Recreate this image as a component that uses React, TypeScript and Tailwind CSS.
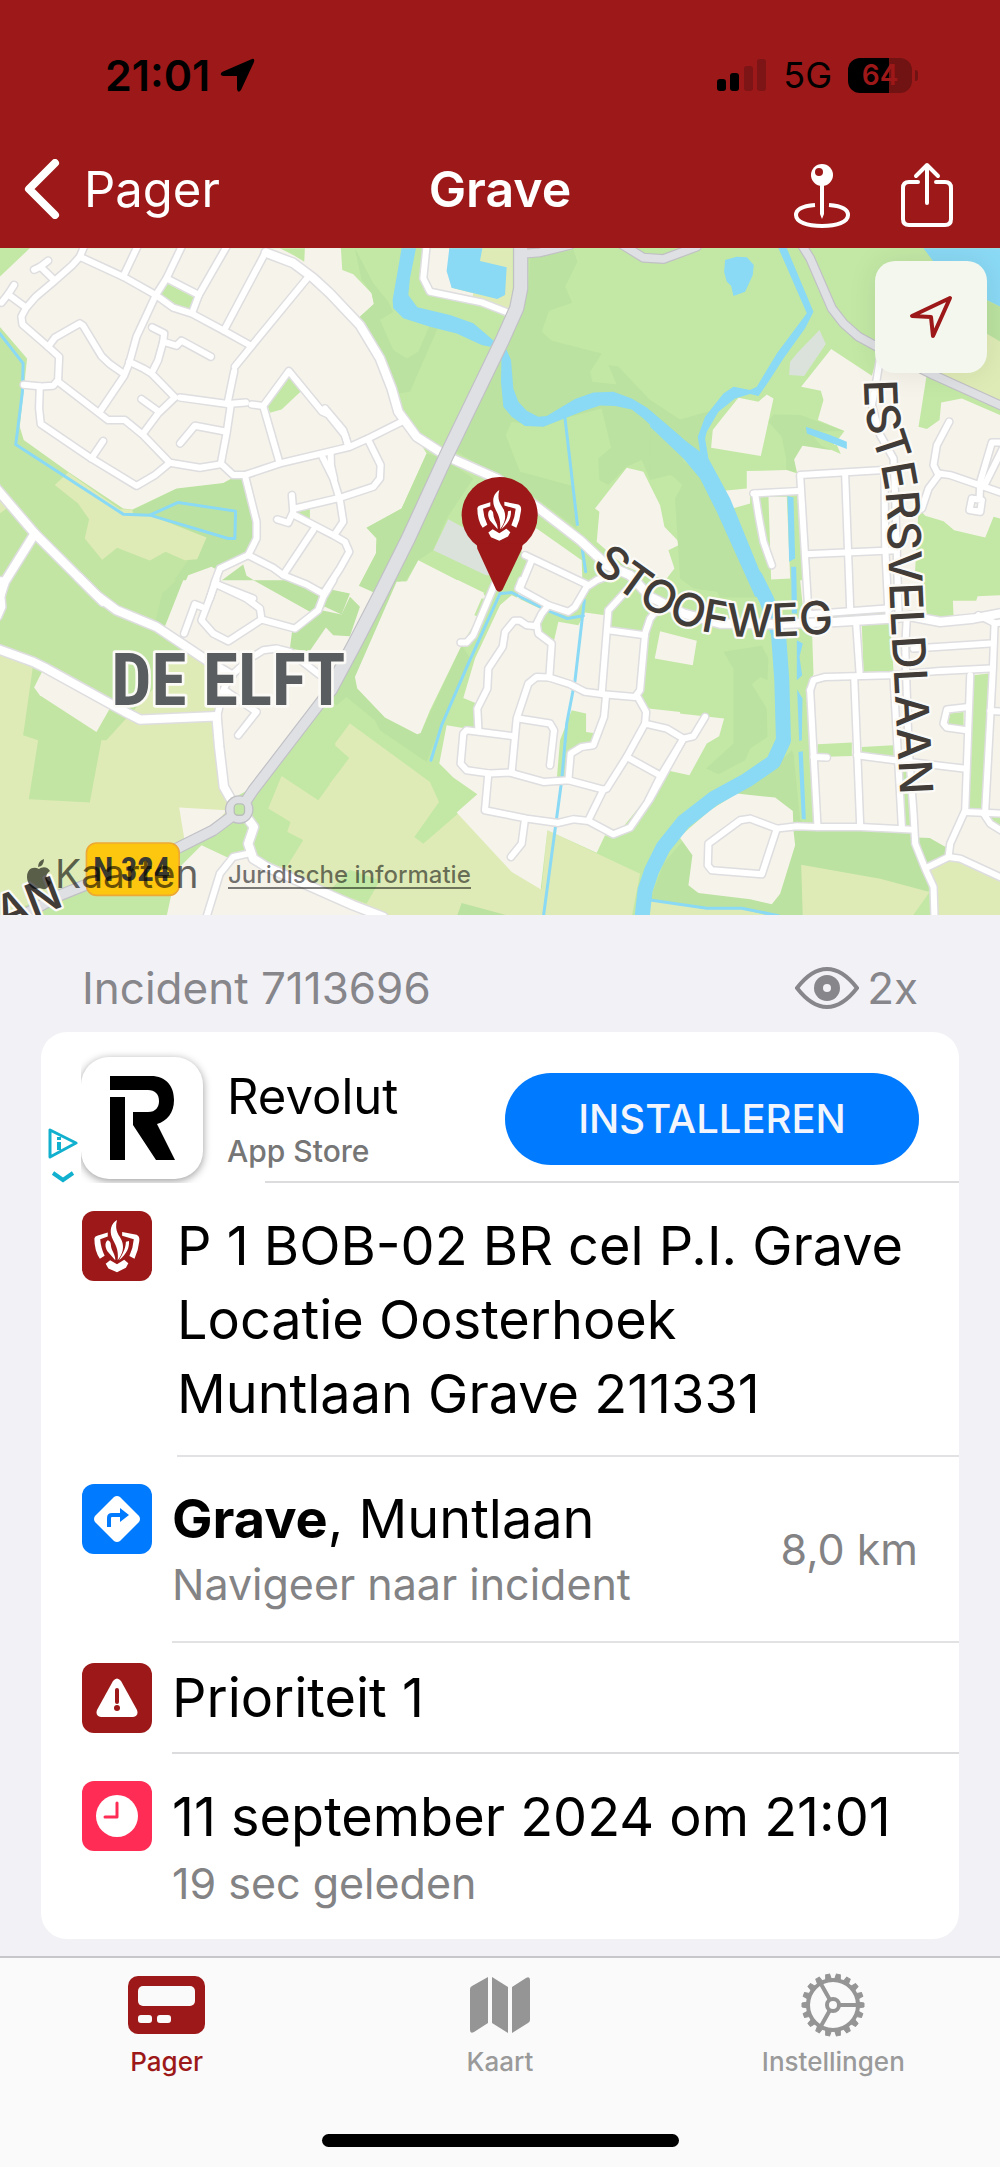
import type { ReactNode } from "react";

const CREAM = "#f6f3eb";
const LIGHT = "#c3e8a5";
const MEADOW = "#c3e5a4";
const WOOD = "#bbe2a0";
const FIELD = "#dfebb6";
const WATER = "#8ad9f5";
const PAVED = "#dbe2db";

type Sheet = {
  x: number;
  y: number;
  areas: [string, string][];
  water?: string[];
  rivers?: string[];
  streams?: string[];
  roads: string[];
  avenues?: string[];
  highways?: string[];
  trunk?: string[];
};

/* The map is surveyed in six sheets, each with its own origin. */
const sheets: Sheet[] = [
  {
    x: 0,
    y: -9,
    areas: [
      [MEADOW, "0,245 78,345 60,545 72,585 400,795 700,700 780,830 600,1050 0,1050"],
      [WOOD, "398,795 530,730 670,714 695,700 730,700 770,830 770,880 745,930 640,970 565,990 540,1050 490,1050 565,945 450,900"],
      [CREAM, "0,95 90,10 1020,10 1020,1050 635,1050 660,970 745,930 770,880 770,830 735,700 695,700 670,714 530,730 398,793 370,790 205,680 72,585 60,545 82,340 0,245"],
      [CREAM, "565,990 635,965 660,980 640,1060 535,1060"],
      [LIGHT, "840,10 915,10 913,50 880,30"],
      [LIGHT, "500,115 585,158 570,195 520,180 482,148"],
      [LIGHT, "868,397 905,437 845,493 810,503 802,478"],
      [LIGHT, "885,803 1018,770 1010,840 1000,868"],
      [WOOD, "660,1010 730,958 740,992 845,1056 640,1050"],
      [FIELD, "205,682 360,792 397,793 400,806 455,812 620,877 592,942 555,945 497,920 450,946 352,908 307,944 255,880 268,822 235,775 165,720"],
      [FIELD, "0,765 20,790 0,805"],
    ],
    streams: ["0,265 70,355 68,440 48,598 370,807 450,810 535,772 707,798 705,880 685,880 450,810"],
    roads: [
      "255,0 240,35 218,60 165,107 108,155 78,190 65,215 68,238 145,305 178,335 175,405 160,422 125,424 72,419",
      "145,47 122,65 103,74",
      "122,65 163,105",
      "43,120 25,148 5,173",
      "25,148 75,185",
      "240,35 370,95 468,150 520,188 575,205 672,257 755,303",
      "415,0 370,95",
      "548,0 500,100 468,150 438,215 410,275 388,355 373,392 300,500",
      "500,100 597,150",
      "683,0 597,150 577,203",
      "798,20 672,257",
      "930,90 755,303 705,365",
      "703,378 683,475 692,485 680,565 663,655",
      "145,305 165,278 240,235 250,242 305,333 330,357 370,385",
      "175,410 325,525 375,525 430,570 510,653 600,668 665,657 700,690 735,690 840,655 1050,605 1105,580 1155,555 1205,530",
      "120,424 118,490 123,537 275,640 410,722 465,690 510,653",
      "310,588 275,640",
      "388,350 430,370 455,385 525,457 475,505 430,565",
      "425,462 475,498",
      "457,247 493,265 490,290 475,345 460,375",
      "490,290 530,302 545,287 633,335",
      "540,457 683,477 738,472",
      "755,478 790,483 867,378 967,500 985,508 1035,570 1045,605",
      "790,483 838,650",
      "541,595 585,542 680,560",
      "735,690 770,830 770,880 745,930 660,970 645,1010 630,1060",
      "745,930 820,968 850,990 920,1018 970,1046",
      "850,990 940,855",
      "965,630 1000,700 1020,765 1030,830 1003,870",
      "992,620 993,660 1002,700",
      "876,750 880,800 865,833 832,823",
      "885,790 1020,758 1120,725 1140,700 1142,660 1105,585",
      "880,808 1000,870 1035,890 1048,920 1020,970 970,1046",
      "645,1015 760,1060",
    ],
    avenues: ["-10,730 105,865 310,1070", "105,865 15,1010 -5,1070"],
  },
  {
    x: 990,
    y: -9,
    areas: [
      [CREAM, "-60,10 33,10 37,75 70,88 125,145 132,177 90,215 150,350 195,470 290,625 215,790 110,848 140,880 138,925 70,1055 -60,1055"],
      [WOOD, "75,10 130,115 175,170 190,200 150,225 190,315 230,340 265,320 300,240 325,245 240,440 205,445 150,350 90,215 132,177 125,145 95,105"],
      [WOOD, "600,40 730,15 742,50 705,125 727,173 657,197 635,260 665,287 815,325 780,380 787,410 860,418 835,360 865,365 960,465 1060,530 1060,700 1020,690 960,705 935,645 890,665 835,720 808,705 805,640 843,608 815,490 700,520 640,545 545,530 527,570 570,680 725,722 740,850 620,760 500,690 380,620 500,360 595,130"],
      [WOOD, "290,625 340,640 430,700 350,820 310,915 265,945 225,1010 160,1055 70,1055 138,925 140,880 110,848 215,790"],
      [PAVED, "355,822 460,880 490,990 468,990 310,915"],
      [CREAM, "265,945 460,1045 470,1060 195,1060 212,1010 230,1010"],
      [CREAM, "620,850 755,945 757,1010 575,920 560,860"],
      [CREAM, "600,940 760,1020 760,1060 560,1060 575,1010"],
      [CREAM, "890,668 940,680 990,780 1003,845 1042,885 1045,900 1015,915 1033,970 1010,1000 950,990 880,960 800,890 808,800 795,790"],
      [FIELD, "450,10 548,10 548,150 535,195 420,160"],
      [CREAM, "300,10 358,10 365,128 430,145 425,165 310,140 290,110"],
    ],
    water: [
      "215,10 258,10 240,100 235,150 262,187 360,210 430,235 495,290 480,305 455,300 380,265 300,245 220,220 190,190 188,165",
      "358,10 457,10 450,48 530,67 525,150 502,162 365,128 350,78",
      "515,310 530,315 543,345 550,430 565,470 590,497 625,515 650,513 735,462 790,442 850,440 905,460 950,487 1052,575 1052,628 940,520 905,493 855,483 810,481 760,498 640,545 585,543 545,515 520,485 513,410",
    ],
    streams: ["705,520 742,838", "757,913 767,980"],
    roads: ["290,0 280,100 300,140 455,172 535,203", "-15,490 40,555 55,600", "605,945 570,1030"],
    avenues: [
      "-192,23 -110,54 -50,99 0,145 90,240 150,340 185,430 205,500 260,575 345,630",
      "365,640 500,700 620,785 750,885 830,960 900,990",
    ],
    highways: ["595,25 630,22 720,0", "870,-5 940,38 1000,42 1100,5"],
    trunk: ["572,-10 572,130 560,190 515,290 350,630 235,880 150,1050 75,1195 0,1335"],
  },
  {
    x: 1950,
    y: -9,
    areas: [
      [WOOD, "0,465 85,525 190,495 150,570 160,640 100,620 0,540"],
      [WOOD, "0,690 65,690 97,720 75,760 90,1000 130,1030 310,1055 250,850 170,700 90,640 0,560"],
      [WOOD, "355,530 370,508 450,510 583,558 570,625 457,602 432,643 445,680 408,680 408,640 395,575"],
      [LIGHT, "480,560 583,558 570,625 510,600"],
      [PAVED, "508,255 527,297 462,393 417,390 420,350 440,325"],
      [CREAM, "543,312 665,392 680,340 830,385 805,545 830,552 868,525 873,472 935,460 1050,510 1050,820 1030,815 1005,877 912,855 880,828 825,812 805,790 790,1060 470,1060 455,720 440,680 432,643 457,602 540,615 583,558 503,525 520,465 512,437 453,425"],
      [LIGHT, "510,600 572,627 560,600"],
      [CREAM, "265,458 325,470 350,448 370,460 332,633 183,608 188,555 215,520"],
      [CREAM, "290,678 410,675 455,690 450,745 300,745 300,775 247,790 222,737 290,730"],
      [CREAM, "355,755 410,755 420,1000 363,1003"],
      [FIELD, "1010,250 1050,280 1050,470 850,385 900,300"],
      [WOOD, "1005,165 1050,185 1050,290 1000,260"],
    ],
    water: [
      "820,10 1050,10 1050,185 980,150 850,50",
      "225,45 260,35 290,37 311,60 308,90 285,140 250,153 243,122 230,110 222,80",
      "0,496 110,590 150,620 143,575 165,515 220,445 250,425 300,435 320,425 380,325 470,205 383,5 408,5 490,200 465,250 400,340 355,410 325,453 300,447 255,460 205,500 170,560 165,580 175,640 240,760 360,1055 315,1055 200,800 150,700 100,640 0,545",
      "467,545 540,570 590,590 590,612 470,565",
      "412,753 430,757 435,940 417,950",
      "423,965 438,965 441,1105 425,1105",
    ],
    roads: [
      "690,335 680,400 665,480 690,570 730,640 735,760 745,1100",
      "310,745 445,738",
      "315,745 325,810 340,890 365,960",
      "475,1105 450,690 700,675",
      "585,690 600,1090",
      "465,927 740,915",
      "703,690 705,900 715,1110",
      "795,800 815,790 835,730 865,690 850,660 860,600 897,530",
      "865,685 900,690 1060,745",
      "988,760 990,710 1025,592 1060,592",
      "1060,605 1003,720",
      "965,760 995,765 990,800 958,795 965,760",
    ],
    highways: ["455,0 480,40 545,190 580,235 625,275 680,305 850,390 1060,485"],
  },
  {
    x: 0,
    y: 996,
    areas: [
      [MEADOW, "0,0 555,0 495,135 620,240 510,310 320,480 280,670 80,660 0,225"],
      [WOOD, "530,0 555,0 495,135 465,130 487,40"],
      [CREAM, "550,0 760,0 1040,0 1140,45 1050,200 990,330 760,620 690,660 665,620 650,400 690,290 495,140"],
      [WOOD, "760,0 860,0 1050,40 1025,103 975,80 965,90 885,145 930,95"],
      [WOOD, "877,150 965,90 1025,103 1050,50 1080,80 1050,168 1000,165 978,142 928,215 870,205"],
      [FIELD, "0,225 100,255 70,465 115,480 87,657 270,667 305,480 320,480 465,320 510,250 555,205 630,245 690,290 640,400 650,480 665,620 690,660 690,700 640,750 400,840 180,930 0,1010"],
      [CREAM, "128,272 330,385 290,455 120,345 103,322"],
      [CREAM, "538,682 680,690 640,740 555,785"],
      [CREAM, "605,795 680,830 760,830 1110,1010 500,1010 515,940 540,860"],
      [FIELD, "845,587 955,660 1050,530 1005,490 1050,430 1050,970 780,850 910,780 862,755 872,725 805,685"],
      [LIGHT, "780,850 860,860 910,780 862,755 800,760"],
    ],
    roads: [
      "-10,-0 15,0 5,50 8,80 -5,110",
      "650,0 605,120 640,160 685,183 785,118 885,145 955,90 970,50 1000,0",
      "645,10 740,55 780,85 785,118",
      "605,80 585,72 553,160",
      "690,290 750,235 790,210 830,205 870,215 960,285",
      "652,408 670,330 690,290",
      "675,330 770,395 715,465",
      "745,820 700,830 660,880 620,1010",
    ],
    avenues: [
      "235,-10 290,45 350,90 470,140 620,240 695,285",
      "-10,205 100,245 140,265 385,400 420,418 650,408",
      "650,408 658,500 672,620 692,655",
      "740,710 762,740 745,790 760,835 800,860 1060,975 1150,1010",
    ],
    trunk: ["990,330 760,630 720,690", "720,690 640,750 530,805 180,945 60,1010"],
  },
  {
    x: 990,
    y: 996,
    areas: [
      [WOOD, "160,0 210,0 75,290 82,325 165,412 262,462 272,458 395,195 425,240 330,440 290,545 150,450 135,420 50,350 20,375 0,360 0,320"],
      [FIELD, "60,430 300,605 327,665 253,770 280,790 385,700 545,875 635,925 652,750 930,880 905,1010 150,1010 0,940 0,610 60,535 15,495"],
      [LIGHT, "60,868 150,900 110,970 0,930"],
      [WOOD, "380,1010 395,968 550,1010"],
      [CREAM, "200,5 385,0 462,38 433,105 445,110 395,195 300,390 272,458 262,462 165,412 82,325 75,290"],
      [CREAM, "545,45 510,75 435,235 400,353 440,370 440,450 350,435 328,550 370,592 442,642 380,697 545,875 632,927 652,750 800,817 825,765 855,770 960,640 1020,572 1050,570 1050,395 955,385 920,340 945,170 835,150 825,105 765,97 745,135 685,125 670,190 620,150 640,90"],
      [LIGHT, "725,390 768,400 768,455 800,460 780,490 720,510 715,600 680,600 690,480"],
      [CREAM, "570,0 570,25 710,95 765,20 740,0"],
    ],
    streams: [
      "640,85 545,37 510,40 415,250 335,435 303,540",
      "640,85 712,115 760,107",
      "763,60 735,300 710,430 695,600 640,1010",
    ],
    roads: [
      "495,10 430,165 410,187 392,187",
      "585,-75 775,15",
      "575,0 565,25 655,75 715,95 735,80 770,20 800,0 840,-15",
      "655,75 635,100 620,130 625,160 665,190 658,290",
      "620,138 590,135 570,122 552,122 525,155 518,200 475,265 472,325 442,385 445,445",
      "545,467 410,450 400,460 392,550 410,570 480,580 540,577 640,605 715,600 820,628",
      "658,292 620,290 595,310 560,415 545,575",
      "658,292 720,312 765,335 820,342 915,350 930,330 945,160 960,115 980,90",
      "565,415 660,430 672,450 660,555",
      "475,580 465,690 590,715 685,728 730,717 775,722 850,762 900,742 960,655 1060,475",
      "585,715 575,790 543,830",
      "890,30 835,90 815,340",
      "835,150 945,165",
      "828,345 822,410 790,495 755,500 722,520 715,600",
      "920,345 948,395 945,430 890,530 830,625 820,628 775,720",
      "945,430 1010,445 1060,475 1090,468 1125,410",
      "890,530 990,585",
    ],
  },
  {
    x: 1950,
    y: 996,
    areas: [
      [WOOD, "220,215 335,197 355,235 352,300 330,290 305,312 350,385 352,470 300,505 285,540 205,582 168,565 250,490 250,265"],
      [WOOD, "100,0 300,0 330,52 210,52 195,25"],
      [WOOD, "430,520 450,720 470,735 785,750 830,870 835,930 780,1010 380,1010 0,960 40,850 100,780 260,640 350,580 425,510"],
      [CREAM, "450,0 820,0 830,110 910,108 908,62 978,62 982,48 1050,45 1050,720 1020,720 950,705 885,800 838,773 805,772 785,745 500,740 478,330 490,280 485,130 460,100"],
      [WOOD, "805,772 838,773 885,800 890,830 830,860"],
      [CREAM, "950,700 995,710 1050,760 1050,885 895,830 890,800"],
      [LIGHT, "470,98 720,85 720,112 560,125 480,125"],
      [LIGHT, "635,135 720,125 730,272 640,275"],
      [LIGHT, "502,492 605,487 605,527 502,530"],
      [LIGHT, "635,500 728,495 735,535 635,515"],
      [LIGHT, "970,285 1015,280 995,685 955,685"],
      [LIGHT, "900,400 940,395 940,438 892,435"],
      [LIGHT, "755,540 775,540 780,735 765,740"],
      [LIGHT, "1010,710 1050,705 1050,740"],
      [CREAM, "30,153 140,182 128,255 14,235"],
      [CREAM, "0,390 222,415 207,468 170,490 118,585 60,572 0,640"],
      [CREAM, "88,770 180,690 260,640 375,652 428,692 430,750 435,795 390,940 365,972 300,957 145,938 115,915 127,825"],
      [FIELD, "453,853 690,895 838,935 785,1010 458,1010"],
      [FIELD, "835,870 895,840 940,850 1050,900 1050,1010 860,1010"],
      [FIELD, "-10,960 170,987 275,987 375,1010 -20,1010"],
    ],
    water: [
      "440,180 458,190 448,230 456,285 440,300",
      "441,328 457,355 455,480 447,482",
      "445,515 458,513 467,717 455,717",
    ],
    rivers: ["315,-10 350,60 385,160 395,300 400,480 370,545 290,600 190,655 100,725 40,800 5,870 -15,930 -25,1020"],
    streams: ["-5,958 170,984 275,984 385,1006"],
    roads: [
      "475,102 720,84",
      "618,130 628,275",
      "612,290 630,735",
      "480,330 490,300 525,290 720,285 870,272 1020,265",
      "480,330 502,740",
      "730,290 755,740",
      "790,205 1020,190",
      "1033,130 1028,265 1005,690",
      "960,285 945,690 900,790 895,830 830,862",
      "895,830 930,835 1060,895",
      "945,695 1060,700",
      "1000,700 1020,730 1060,755",
      "1020,392 1060,394",
      "955,380 890,388 880,430 890,442 950,450",
      "620,525 735,540 940,565",
      "490,530 530,532",
      "380,745 440,738 502,740 630,740 785,748",
      "380,745 300,715 270,720 175,790 173,855 185,870 335,882 380,745",
      "100,475 30,590 -5,660",
      "985,105 1035,130 1060,125",
      "770,110 765,200 775,500 790,700 795,790 825,865 850,920 853,1015",
    ],
    avenues: ["-60,-15 0,50 100,100 210,130 370,132 560,125 720,115 780,108 870,125 970,115 1060,98"],
  },
];

function SheetLayer({ draw }: { draw: (sheet: Sheet) => ReactNode }) {
  return (
    <>
      {sheets.map((s, i) => (
        <g key={i} transform={`translate(${s.x} ${s.y})`}>
          {draw(s)}
        </g>
      ))}
    </>
  );
}

function lines(list: string[] | undefined, stroke: string, width: number) {
  return (list ?? []).map((points) => (
    <polyline
      key={points}
      points={points}
      fill="none"
      stroke={stroke}
      strokeWidth={width}
      strokeLinecap="round"
      strokeLinejoin="round"
    />
  ));
}

function polygons(list: [string, string][]) {
  return list.map(([fill, points], i) => <polygon key={i} points={points} fill={fill} />);
}

function EmblemShapes() {
  return (
    <>
      <path d="M112 144Q113 138 120 136L151 126V138L129 146Q131 172 142 194L128 203Q112 180 112 144Z" />
      <path d="M193 125L235 133Q245 137 243 152Q240 180 229 203L214 195Q225 172 227 146L193 136Z" />
      <path d="M178 90C160 101 156 121 163 140C170 158 184 172 180 207C194 190 200 170 192 150C186 135 169 124 178 90Z" />
      <path d="M151 149C143 153 142 168 150 181L173 207C174 190 161 180 160 162C160 155 156 150 151 149Z" />
      <path d="M204 153L213 151C214 170 208 187 184 207C191 192 203 178 204 153Z" />
      <path d="M145 217L158 207L178 219L199 206L211 216L204 229L178 242L153 231Z" />
    </>
  );
}

function MapDrawing() {
  return (
    <svg viewBox="0 0 3000 2000" preserveAspectRatio="xMidYMid slice" className="block h-full w-full" role="img" aria-label="Kaart van Grave">
      <rect width="3000" height="2000" fill={LIGHT} />
      <SheetLayer draw={(s) => polygons(s.areas)} />
      <SheetLayer
        draw={(s) => (
          <>
            {polygons((s.water ?? []).map((p) => [WATER, p]))}
            {lines(s.rivers, WATER, 45)}
            {lines(s.streams, WATER, 9)}
          </>
        )}
      />
      <SheetLayer
        draw={(s) => (
          <>
            {lines(s.roads, "#dedddf", 27)}
            {lines(s.avenues, "#dedddf", 34)}
          </>
        )}
      />
      <SheetLayer
        draw={(s) => (
          <>
            {lines(s.roads, "#ffffff", 18)}
            {lines(s.avenues, "#ffffff", 25)}
          </>
        )}
      />
      <SheetLayer
        draw={(s) => (
          <>
            {lines(s.highways, "#c0c0c5", 30)}
            {lines(s.trunk, "#c0c0c5", s.x === 0 ? 36 : 46)}
          </>
        )}
      />
      <circle cx="718" cy="1684" r="43" fill="#c0c0c5" />
      <SheetLayer
        draw={(s) => (
          <>
            {lines(s.highways, "#dfe0e4", 23)}
            {lines(s.trunk, "#dfe0e4", s.x === 0 ? 29 : 39)}
          </>
        )}
      />
      <circle cx="718" cy="1684" r="39" fill="#dfe0e4" />
      <rect x="703" y="1667" width="31" height="34" rx="11" fill={LIGHT} stroke="#b9bdb9" strokeWidth="4" />

      <g
        fontFamily="Inter, sans-serif"
        fontWeight="500"
        fontSize="137"
        fill="#413c38"
        stroke="#fbfaf6"
        strokeWidth="14"
        strokeLinejoin="round"
        paintOrder="stroke"
      >
        <path id="stoofweg" d="M1772 955C1900 1065 2030 1163 2260 1166C2350 1166 2450 1160 2600 1145" fill="none" stroke="none" />
        <path id="estersveldlaan" d="M2592 396C2590 470 2600 530 2622 590C2642 645 2654 700 2660 780C2665 950 2670 1100 2680 1250L2706 1760" fill="none" stroke="none" />
        <text><textPath href="#stoofweg">STOOFWEG</textPath></text>
        <text><textPath href="#estersveldlaan">ESTERSVELDLAAN</textPath></text>
        <text transform="translate(8 2044) rotate(-21)">AN</text>
      </g>
      <text
        x="334"
        y="1370"
        fontFamily="'Liberation Sans Narrow', 'Roboto Condensed', 'DejaVu Sans Condensed', sans-serif"
        fontWeight="700"
        fontSize="214"
        fill="#595d5f"
        stroke="#fbfaf6"
        strokeWidth="16"
        strokeLinejoin="round"
        paintOrder="stroke"
      >
        DE ELFT
      </text>
      <rect x="260" y="1784" width="278" height="157" rx="30" fill="#fec70f" stroke="#eda935" strokeWidth="5" />
      <text
        x="396"
        y="1898"
        textAnchor="middle"
        fontFamily="'Liberation Sans Narrow', 'Roboto Condensed', 'DejaVu Sans Condensed', sans-serif"
        fontWeight="700"
        fontSize="98"
        fill="#3a3a30"
      >
        N 324
      </text>

      <g fill="#9d1818">
        <circle cx="1499" cy="801" r="114" />
        <path d="M1430 885L1568 885L1566 902L1508 1024Q1498 1038 1488 1024L1432 902Z" />
      </g>
      <g transform="translate(1320 636)" fill="#ffffff">
        <EmblemShapes />
      </g>
    </svg>
  );
}

function StatusBar() {
  return (
    <div className="flex h-[150px] items-center justify-between pr-[82px] pl-[105px] text-black">
      <div className="flex items-center gap-[10px]">
        <span className="text-[43px] leading-none font-semibold">21:01</span>
        <svg width="35" height="34" viewBox="0 0 35 34" aria-hidden="true">
          <path d="M32 1Q35 0 34 4L21 32Q18 36 17 31V18H3Q-1 17 2 14Z" />
        </svg>
      </div>
      <div className="flex items-center gap-4">
        <svg width="50" height="34" viewBox="0 0 50 34" aria-hidden="true">
          <rect x="0" y="21" width="9" height="12" rx="3" />
          <rect x="13" y="15" width="9" height="18" rx="3" />
          <rect x="27" y="8" width="9" height="25" rx="3" fill="#7d1416" />
          <rect x="40" y="1" width="9" height="32" rx="3" fill="#7d1416" />
        </svg>
        <span className="text-[36px] leading-none">5G</span>
        <div className="flex items-center gap-[3px]">
          <div className="flex h-[35px] w-16 items-center justify-center rounded-xl bg-[linear-gradient(90deg,#000_64%,#711213_64%)] text-[28px] leading-none font-semibold text-[#9d1818]">
            64
          </div>
          <div className="h-[11px] w-[3px] rounded-r bg-[#711213]" />
        </div>
      </div>
    </div>
  );
}

function NavBar() {
  return (
    <div className="grid h-[98px] grid-cols-3 items-center px-6 pb-5 text-white">
      <button type="button" className="flex items-center gap-6 justify-self-start">
        <svg width="36" height="60" viewBox="0 0 36 60" fill="none" stroke="currentColor" strokeWidth="8" strokeLinecap="round" strokeLinejoin="round" aria-hidden="true">
          <path d="M31 4L5 30L31 56" />
        </svg>
        <span className="text-[49px] leading-none">Pager</span>
      </button>
      <h1 className="justify-self-center text-[50px] leading-none font-semibold">Grave</h1>
      <div className="flex items-center gap-[50px] justify-self-end pt-3 pr-[22px]">
        <button type="button" aria-label="Locatie">
          <svg width="56" height="66" viewBox="0 0 56 66" fill="none" stroke="currentColor" aria-hidden="true">
            <circle cx="28" cy="13" r="11" fill="currentColor" stroke="none" />
            <circle cx="25" cy="10" r="4" fill="#9d1818" stroke="none" />
            <path d="M26 22H30L30 52L28 57L26 52Z" fill="currentColor" stroke="none" />
            <path d="M21 43C8 44 2 48 2 53C2 60 13 64 28 64C43 64 54 60 54 53C54 48 48 44 35 43" strokeWidth="4" />
          </svg>
        </button>
        <button type="button" aria-label="Delen">
          <svg width="54" height="66" viewBox="0 0 54 66" fill="none" stroke="currentColor" strokeWidth="4" strokeLinecap="round" strokeLinejoin="round" aria-hidden="true">
            <path d="M18 20H9Q3 20 3 26V57Q3 63 9 63H45Q51 63 51 57V26Q51 20 45 20H36" />
            <path d="M27 41V3M16 14L27 3L38 14" />
          </svg>
        </button>
      </div>
    </div>
  );
}

function MapPanel() {
  return (
    <section className="relative aspect-[1000/667] w-full overflow-hidden bg-[#c3e8a5]">
      <MapDrawing />
      <button
        type="button"
        aria-label="Mijn locatie"
        className="absolute top-[13px] right-[13px] flex size-28 items-center justify-center rounded-[20px] bg-[#f3f7ee] shadow-[0_0_30px_rgba(0,0,0,0.08)]"
      >
        <svg width="44" height="44" viewBox="0 0 44 44" fill="none" stroke="#9d1818" strokeWidth="4" strokeLinejoin="round" aria-hidden="true">
          <path d="M41 3L3 21L22 22L24 41Z" />
        </svg>
      </button>
      <div className="absolute bottom-[22px] left-[27px] flex items-center gap-1 text-black/60">
        <svg width="24" height="32" viewBox="0 0 24 32" fill="currentColor" aria-hidden="true">
          <path d="M17 1Q17 8 11 9Q11 3 17 1ZM12 11C15 9 20 8 23 13C18 16 18 22 24 24C22 29 19 32 16 31C13 30 12 30 9 31C5 32 0 25 0 19C0 11 6 8 12 11Z" />
        </svg>
        <span className="text-[39px] leading-none">Kaarten</span>
      </div>
      <a href="#juridisch" className="absolute bottom-[26px] left-[228px] border-b-2 border-black/50 text-[24px] leading-6 font-medium text-black/55">
        Juridische informatie
      </a>
    </section>
  );
}

function Tile({ color, children }: { color: string; children: ReactNode }) {
  return <div className={`flex size-[70px] shrink-0 items-center justify-center rounded-xl ${color}`}>{children}</div>;
}

function AdRow() {
  return (
    <div className="flex h-[151px]">
      <div className="flex w-10 shrink-0 flex-col items-center justify-end gap-3 pl-1">
        <svg width="30" height="31" viewBox="0 0 30 31" fill="none" stroke="#11b0ce" strokeWidth="3" strokeLinejoin="round" aria-label="Advertentie">
          <path d="M2 2V29L28 15Z" />
          <path d="M11 9V12M11 14V22" strokeWidth="4" />
        </svg>
        <svg width="24" height="12" viewBox="0 0 24 12" fill="none" stroke="#11b0ce" strokeWidth="4" aria-hidden="true">
          <path d="M2 2L12 9L22 2" />
        </svg>
      </div>
      <div className="flex w-[184px] shrink-0 overflow-hidden pt-[25px]">
        <div className="flex size-[122px] items-center justify-center rounded-[28px] bg-white shadow-[0_2px_8px_rgba(0,0,0,0.4)]">
          <svg width="68" height="84" viewBox="0 0 68 84" aria-label="Revolut">
            <path d="M2 21H17V84H2Z" />
            <path d="M2 0H43C58 0 66 10 66 24C66 37 59 45 49 48L67 84H48L25 49V36H40C48 36 51 31 51 25C51 18 47 14 40 14H2Z" />
          </svg>
        </div>
      </div>
      <div className="flex min-w-0 flex-1 items-center justify-between border-b-2 border-[#dcdcde] pt-6 pr-10">
        <div className="-ml-[38px]">
          <div className="text-[49px] leading-[56px]">Revolut</div>
          <div className="pt-2 text-[30px] leading-9 font-medium text-[#767676]">App Store</div>
        </div>
        <button type="button" className="h-[92px] w-[414px] rounded-full bg-[#007aff] text-[40px] font-medium text-[#f2f6fc]">
          INSTALLEREN
        </button>
      </div>
    </div>
  );
}

function IncidentCard() {
  return (
    <section className="mx-[41px] overflow-hidden rounded-[26px] bg-white">
      <AdRow />
      <div className="flex pl-[41px]">
        <div className="pt-7">
          <Tile color="bg-[#9d1818]">
            <svg width="48" height="55" viewBox="108 88 140 158" fill="#ffffff" aria-hidden="true">
              <EmblemShapes />
            </svg>
          </Tile>
        </div>
        <p className="ml-[25px] flex-1 border-b-2 border-[#e2e2e4] pt-[26px] pb-6 text-[54px] leading-[74px]">
          P 1 BOB-02 BR cel P.I. Grave
          <br />
          Locatie Oosterhoek
          <br />
          Muntlaan Grave 211331
        </p>
      </div>
      <a href="#navigeer" className="flex pl-[41px]">
        <div className="pt-[27px]">
          <Tile color="bg-[#007aff]">
            <svg width="48" height="48" viewBox="0 0 48 48" aria-hidden="true">
              <path d="M21 2Q24 0 27 2L46 21Q48 24 46 27L27 46Q24 48 21 46L2 27Q0 24 2 21Z" fill="#ffffff" />
              <path d="M16 32V23Q16 20 19 20H30" fill="none" stroke="#007aff" strokeWidth="4" />
              <path d="M27 13L36 20L27 27Z" fill="#007aff" />
            </svg>
          </Tile>
        </div>
        <div className="ml-5 flex flex-1 items-center justify-between border-b-2 border-[#e2e2e4] pt-[27px] pr-[41px] pb-[27px]">
          <div>
            <div className="text-[54px] leading-[70px]">
              <b>Grave</b>, Muntlaan
            </div>
            <div className="text-[43px] leading-[60px] text-[#838385]">Navigeer naar incident</div>
          </div>
          <div className="text-[43px] text-[#838385]">8,0 km</div>
        </div>
      </a>
      <div className="flex pl-[41px]">
        <div className="pt-5">
          <Tile color="bg-[#9d1818]">
            <svg width="44" height="40" viewBox="0 0 44 40" aria-hidden="true">
              <path d="M18 3Q22 -2 26 3L42 32Q44 38 38 39H6Q0 38 2 32Z" fill="#ffffff" />
              <path d="M22 12V24" stroke="#9d1818" strokeWidth="4" strokeLinecap="round" />
              <circle cx="22" cy="30" r="3" fill="#9d1818" />
            </svg>
          </Tile>
        </div>
        <div className="ml-5 flex-1 border-b-2 border-[#dcdcde] pt-5 pb-[19px] text-[54px] leading-[70px]">Prioriteit 1</div>
      </div>
      <div className="flex pt-[27px] pb-[26px] pl-[41px]">
        <Tile color="bg-[#ff2d55]">
          <svg width="42" height="42" viewBox="0 0 42 42" aria-hidden="true">
            <circle cx="21" cy="21" r="21" fill="#ffffff" />
            <path d="M21 8V22H9" fill="none" stroke="#ff2d55" strokeWidth="3" strokeLinecap="round" strokeLinejoin="round" />
          </svg>
        </Tile>
        <div className="ml-5">
          <div className="text-[54px] leading-[72px]">11 september 2024 om 21:01</div>
          <div className="text-[43px] leading-[60px] text-[#838385]">19 sec geleden</div>
        </div>
      </div>
    </section>
  );
}

function GearIcon() {
  const teeth = Array.from({ length: 18 }, (_, i) => i * 20);
  return (
    <svg width="64" height="64" viewBox="0 0 64 64" fill="none" stroke="#959595" aria-hidden="true">
      {teeth.map((angle) => (
        <path key={angle} d="M29 7L30 1H34L35 7Z" fill="#959595" strokeWidth="1" transform={`rotate(${angle + 10} 32 32)`} />
      ))}
      <circle cx="32" cy="32" r="25" strokeWidth="4" />
      <circle cx="32" cy="32" r="6" strokeWidth="4" />
      <path d="M38 32H56M29 27L20 11M29 37L20 53" strokeWidth="4" />
    </svg>
  );
}

function TabBar() {
  return (
    <nav className="border-t-2 border-[#c6c6cb] bg-[#fafafa]">
      <div className="grid grid-cols-3 pt-[14px] text-[26px] leading-8 font-medium text-[#9a9a9a]">
        <button type="button" className="flex flex-col items-center gap-2 text-[#9d1818]">
          <span className="flex h-[66px] items-center">
            <svg width="77" height="58" viewBox="0 0 77 58" aria-hidden="true">
              <rect width="77" height="58" rx="10" fill="#9d1818" />
              <rect x="10" y="10" width="57" height="20" rx="5" fill="#fafafa" />
              <rect x="10" y="39" width="14" height="8" rx="3" fill="#fafafa" />
              <rect x="29" y="39" width="14" height="8" rx="3" fill="#fafafa" />
            </svg>
          </span>
          Pager
        </button>
        <button type="button" className="flex flex-col items-center gap-2">
          <span className="flex h-[66px] items-center">
            <svg width="60" height="56" viewBox="0 0 60 56" fill="#959595" aria-hidden="true">
              <path d="M0 12Q0 10 2 9L18 0V46L4 55Q0 57 0 53Z" />
              <path d="M22 0L38 10V56L22 46Z" />
              <path d="M42 10L56 1Q60 -1 60 3V43Q60 45 58 46L42 56Z" />
            </svg>
          </span>
          Kaart
        </button>
        <button type="button" className="flex flex-col items-center gap-2">
          <span className="flex h-[66px] items-center">
            <GearIcon />
          </span>
          Instellingen
        </button>
      </div>
      <div className="flex justify-center pt-14 pb-5">
        <div className="h-[13px] w-[357px] rounded-full bg-black" />
      </div>
    </nav>
  );
}

export default function App() {
  return (
    <div className="flex min-h-screen flex-col bg-[#f2f1f6] font-['Inter',sans-serif] text-black">
      <header className="bg-[#9d1818]">
        <StatusBar />
        <NavBar />
      </header>
      <main className="flex-1">
        <MapPanel />
        <div className="flex h-[117px] items-center justify-between px-[82px] pt-7 text-[44px] text-[#86868b]">
          <h2>Incident 7113696</h2>
          <div className="flex items-center gap-2">
            <svg width="64" height="42" viewBox="0 0 64 42" aria-hidden="true">
              <path d="M2 21C12 8 21 2 32 2C43 2 52 8 62 21C52 34 43 40 32 40C21 40 12 34 2 21Z" fill="none" stroke="#86868b" strokeWidth="4" />
              <circle cx="32" cy="21" r="13" fill="#86868b" />
              <circle cx="32" cy="21" r="4" fill="#f2f1f6" />
            </svg>
            2x
          </div>
        </div>
        <IncidentCard />
      </main>
      <TabBar />
    </div>
  );
}
